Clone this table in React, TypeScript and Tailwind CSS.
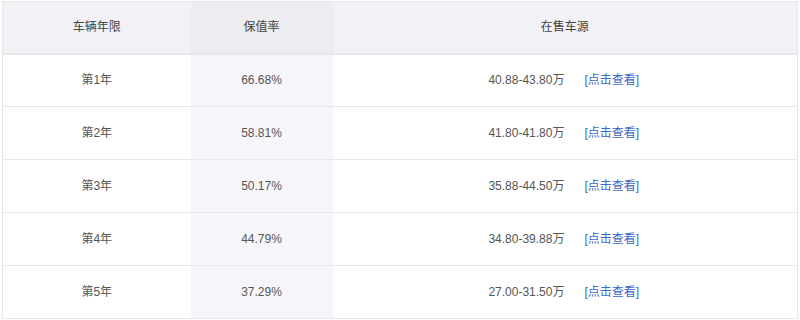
const rows = [
  { year: "第1年", rate: "66.68%", price: "40.88-43.80万" },
  { year: "第2年", rate: "58.81%", price: "41.80-41.80万" },
  { year: "第3年", rate: "50.17%", price: "35.88-44.50万" },
  { year: "第4年", rate: "44.79%", price: "34.80-39.88万" },
  { year: "第5年", rate: "37.29%", price: "27.00-31.50万" },
];

export default function App() {
  return (
    <div className="h-[320px] w-[800px] bg-white pl-[2px] pr-[2px] pt-[1px] font-['Liberation_Sans','Noto_Sans_CJK_SC',sans-serif] text-[12px] text-[#555]">
      <table className="w-[796px] border-collapse border border-[#e6e6e6]">
        <thead>
          <tr className="h-[52px] border-b-2 border-[#e8e8ea] bg-[#f2f2f6] text-[#444]">
            <th className="w-[188px] text-center font-normal">车辆年限</th>
            <th className="w-[142px] bg-[#ececf1] text-center font-normal">保值率</th>
            <th className="text-center font-normal">在售车源</th>
          </tr>
        </thead>
        <tbody>
          {rows.map((r) => (
            <tr key={r.year} className="h-[53px] border-b border-[#e8e8ea]">
              <td className="text-center">{r.year}</td>
              <td className="bg-[#f6f6fa] text-center">{r.rate}</td>
              <td>
                <div className="flex items-center justify-center gap-[20px] pr-[2px]">
                  <span>{r.price}</span>
                  <a className="text-[#3a68c4]">[点击查看]</a>
                </div>
              </td>
            </tr>
          ))}
        </tbody>
      </table>
    </div>
  );
}
